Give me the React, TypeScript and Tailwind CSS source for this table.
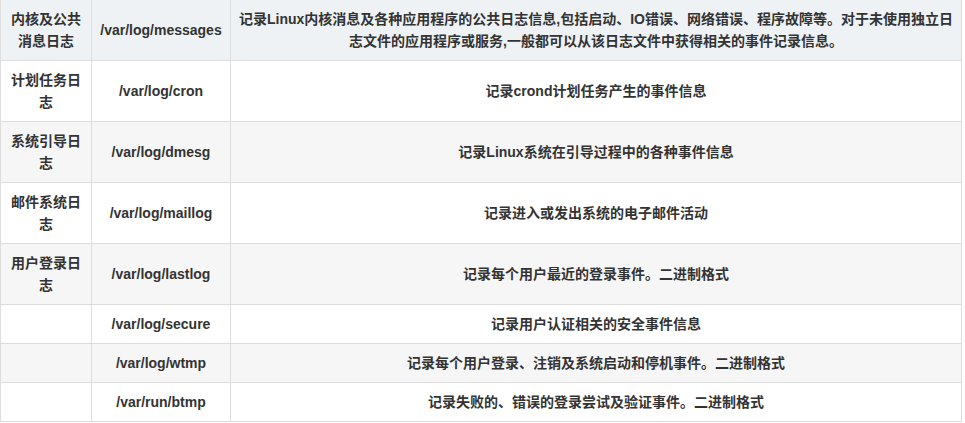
import React from "react";

type Row = { kind: string; path: string; desc: React.ReactNode };

const rows: Row[] = [
  {
    kind: "内核及公共消息日志",
    path: "/var/log/messages",
    desc: (
      <>
        记录Linux内核消息及各种应用程序的公共日志信息,包括启动、IO错误、网络错误、程序故障等。对于未使用独立日
        <br />
        志文件的应用程序或服务,一般都可以从该日志文件中获得相关的事件记录信息。
      </>
    ),
  },
  { kind: "计划任务日志", path: "/var/log/cron", desc: "记录crond计划任务产生的事件信息" },
  { kind: "系统引导日志", path: "/var/log/dmesg", desc: "记录Linux系统在引导过程中的各种事件信息" },
  { kind: "邮件系统日志", path: "/var/log/maillog", desc: "记录进入或发出系统的电子邮件活动" },
  { kind: "用户登录日志", path: "/var/log/lastlog", desc: "记录每个用户最近的登录事件。二进制格式" },
  { kind: "", path: "/var/log/secure", desc: "记录用户认证相关的安全事件信息" },
  { kind: "", path: "/var/log/wtmp", desc: "记录每个用户登录、注销及系统启动和停机事件。二进制格式" },
  { kind: "", path: "/var/run/btmp", desc: "记录失败的、错误的登录尝试及验证事件。二进制格式" },
];

const cell = "border border-[#dddddd] px-2 py-2 text-center align-middle";

export default function App() {
  return (
    <div className="w-[965px] h-[423px] overflow-hidden bg-white">
      <table
        className="-mt-px w-[962px] table-fixed border-collapse text-[14px] leading-[22px] font-bold text-[#333333]"
        style={{ fontFamily: '"Liberation Sans", "Noto Sans CJK SC", sans-serif' }}
      >
        <colgroup>
          <col className="w-[91px]" />
          <col className="w-[139px]" />
          <col />
        </colgroup>
        <tbody>
          {rows.map((r, i) => (
            <tr
              key={r.path}
              className={i === 0 ? "bg-[#eef2f5]" : i % 2 === 0 ? "bg-[#f6f6f6]" : "bg-white"}
            >
              <td className={cell}>{r.kind}</td>
              <td className={cell}>{r.path}</td>
              <td className={cell}>{r.desc}</td>
            </tr>
          ))}
        </tbody>
      </table>
    </div>
  );
}
